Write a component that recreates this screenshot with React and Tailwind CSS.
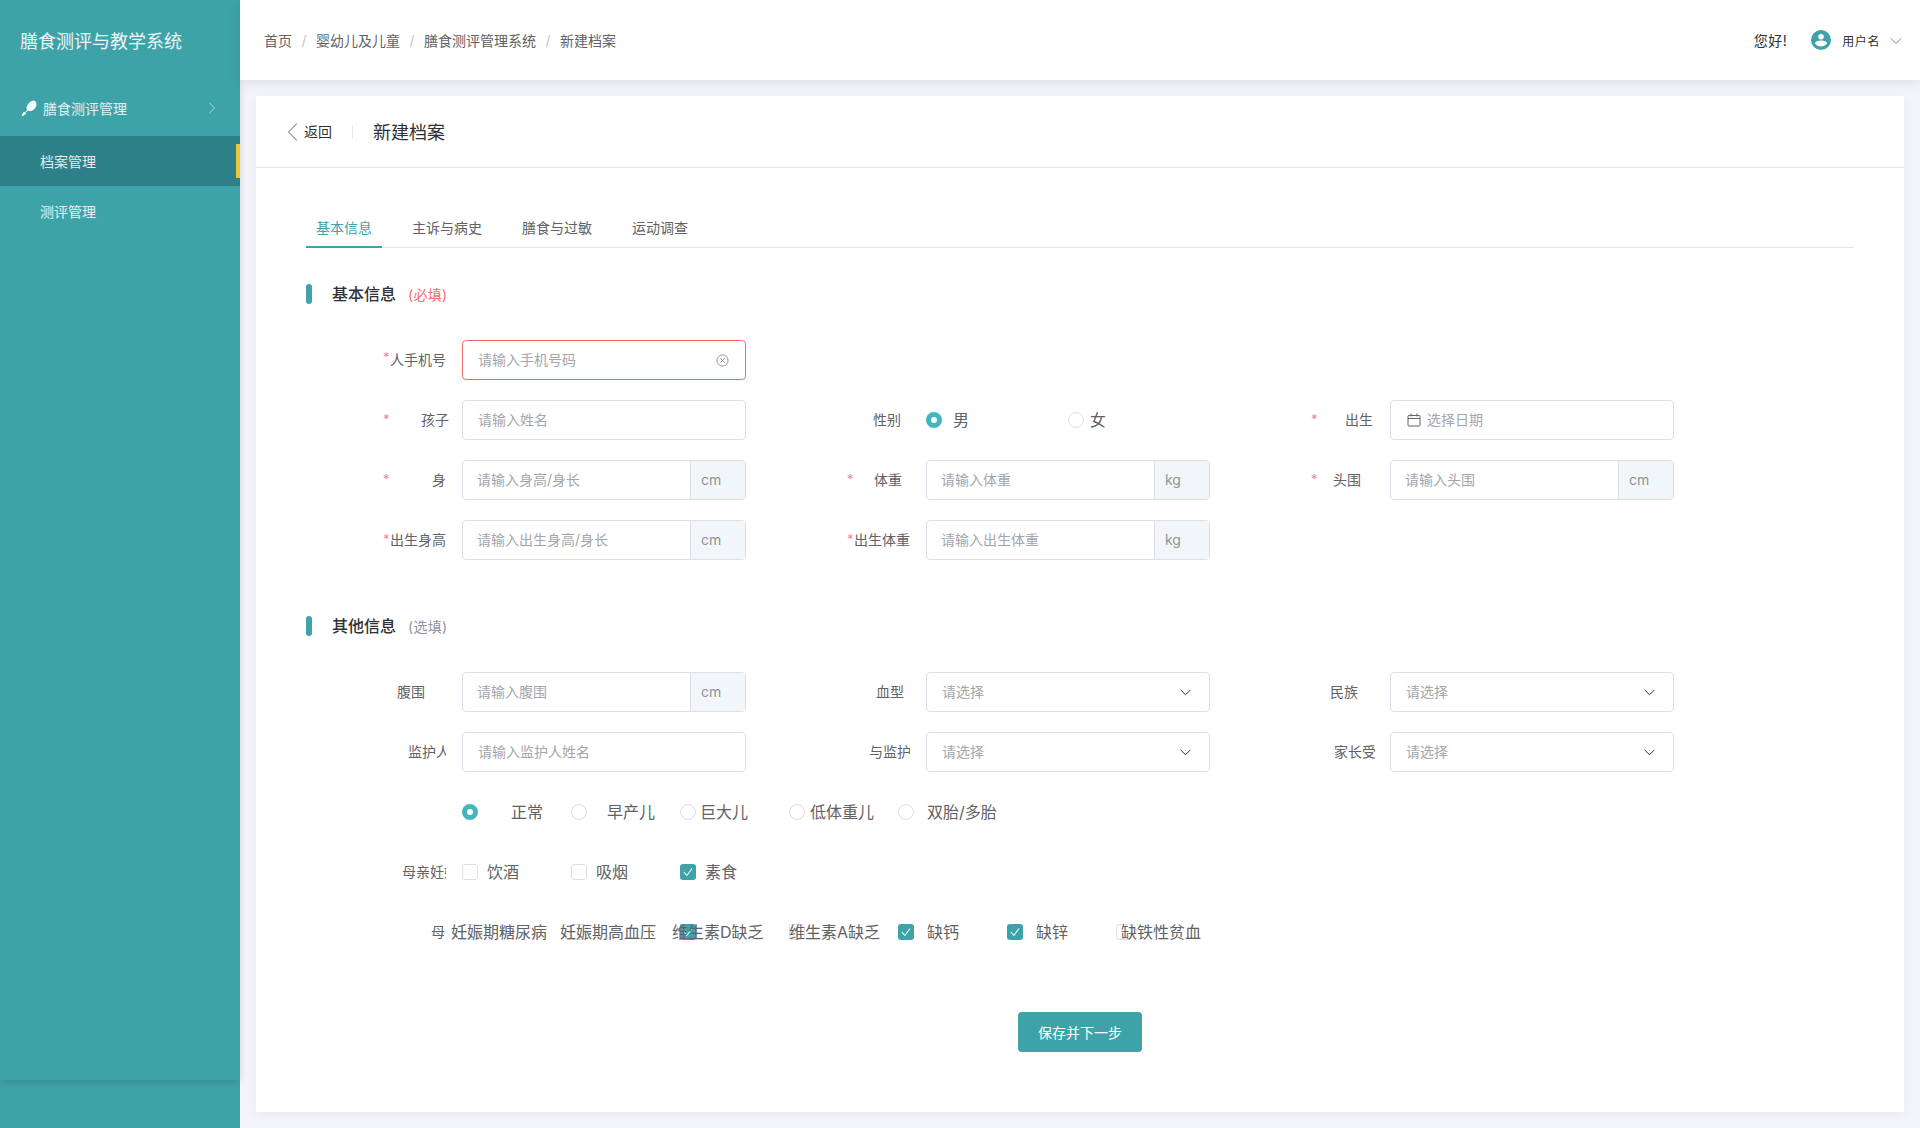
const Chev = ({ d, className }) => (
  <svg viewBox="0 0 12 12" className={className} fill="none" stroke="currentColor" strokeWidth="1" strokeLinecap="round" strokeLinejoin="round">
    <path d={d} vectorEffect="non-scaling-stroke" />
  </svg>
);
const down = "M1 3.5 L6 8.5 L11 3.5";

function Label({ text, cls, star, high }) {
  return (
    <div className="relative w-[156px] shrink-0 h-10">
      {star && <span className={`absolute left-[77px] top-0 text-[13px] text-[#f78989] z-10 ${high ? "leading-[35px]" : "leading-[39px]"}`}>*</span>}
      <div className={`h-10 leading-10 text-[14px] text-[#606266] whitespace-nowrap overflow-hidden ${cls}`}>{text}</div>
    </div>
  );
}

function TextInput({ ph, unit, error }) {
  return (
    <div className={`w-[284px] h-10 flex items-stretch rounded-[4px] border bg-white overflow-hidden ${error ? "border-[#f56c6c]" : "border-[#dcdfe6]"}`}>
      <input readOnly placeholder={ph} className={`flex-1 min-w-0 h-full pb-[2px] text-[14px] outline-none bg-transparent placeholder:text-[#a3a6ad] ${unit ? "pl-[14px]" : "pl-[15px]"}`} />
      {error && (
        <div className="flex items-center pr-[16px]">
          <svg viewBox="0 0 14 14" className="w-[13px] h-[13px] text-[#8d9095]" fill="none" stroke="currentColor" strokeWidth="1">
            <circle cx="7" cy="7" r="6" />
            <path d="M4.5 4.5 L9.5 9.5 M9.5 4.5 L4.5 9.5" />
          </svg>
        </div>
      )}
      {unit && <div className="w-[55px] shrink-0 bg-[#f3f6f8] border-l border-[#dcdfe6] pl-[10px] leading-[38px] text-[14px] text-[#909399]">{unit}</div>}
    </div>
  );
}

function Select() {
  return (
    <div className="w-[284px] h-10 flex items-center justify-between rounded-[4px] border border-[#dcdfe6] bg-white pl-[15px] pr-[18px]">
      <span className="text-[14px] pb-[1px] text-[#a3a6ad]">请选择</span>
      <Chev d={down} className="w-[11px] h-[11px] text-[#303133]" />
    </div>
  );
}

function Radio({ checked }) {
  return checked ? (
    <span className="w-4 h-4 shrink-0 rounded-full bg-[#45b6c0] flex items-center justify-center">
      <span className="w-[6px] h-[6px] rounded-full bg-white" />
    </span>
  ) : (
    <span className="w-4 h-4 shrink-0 rounded-full border border-[#dcdfe6] bg-white" />
  );
}

function Box({ checked }) {
  return checked ? (
    <span className="w-4 h-4 shrink-0 rounded-[3px] bg-[#3ea3a8] flex items-center justify-center">
      <svg viewBox="0 0 12 12" className="w-[14px] h-[14px]" fill="none" stroke="white" strokeWidth="0.9"><path d="M2.5 6 L5 9 L9.5 3" /></svg>
    </span>
  ) : (
    <span className="w-4 h-4 shrink-0 rounded-[3px] border border-[#dcdfe6] bg-white" />
  );
}

function Opt({ children, w, ml, text }) {
  return (
    <div className={`flex items-center shrink-0 ${w}`}>
      {children}
      <span className={`relative text-[16px] text-[#606266] whitespace-nowrap ${ml}`}>{text}</span>
    </div>
  );
}

function Col({ children }) {
  return <div className="w-[464px] shrink-0 flex items-center">{children}</div>;
}

function Row({ children }) {
  return <div className="flex h-10">{children}</div>;
}

function Section({ title, note, noteCls }) {
  return (
    <div className="flex items-center h-5">
      <span className="w-[6px] h-5 rounded-[3px] bg-[#3ea3a8]" />
      <span className="ml-[20px] text-[16px] font-medium text-[#303133]">{title}</span>
      <span className={`ml-[12px] text-[14px] tracking-[0.3px] ${noteCls}`}>{note}</span>
    </div>
  );
}

export default function App() {
  return (
    <div className="flex w-full h-[1128px] overflow-hidden bg-[#f4f5fa] font-['Inter','Noto_Sans_CJK_SC',sans-serif]">
      <aside className="w-[240px] shrink-0 h-full bg-[#3ea3a8]">
        <div className="h-[1080px] shadow-[0_2px_8px_rgba(0,0,0,0.14)] text-white">
          <div className="h-20 pl-5 leading-[84px] text-[18px] text-white/90">膳食测评与教学系统</div>
          <div className="h-[56px] flex items-center pl-[20px] pr-[22px] text-[14px] text-white/85">
            <svg viewBox="0 0 16 16" className="w-[17px] h-[17px] shrink-0" fill="white">
              <path d="M15.5 4.2c0 2.6-2.6 5.6-5.4 6.2-1 .2-1.9 0-2.6-.6L5.3 12c.3.6.2 1.2-.2 1.6-.4.4-.9.4-1.2.2-.1.5-.3.9-.7 1.1-.5.2-1.2 0-1.4-.5-.3-.5-.1-1.1.4-1.4.2-.1.5-.2.7-.1-.2-.4-.1-.9.3-1.2.4-.4 1-.4 1.5-.2l2.1-2.1c-.6-.8-.8-1.7-.5-2.7C7 3.9 9.4 1 12 .6c2-.3 3.5 1.2 3.5 3.6z" />
            </svg>
            <span className="ml-[6px]">膳食测评管理</span>
            <Chev d="M3.5 1 L8.5 6 L3.5 11" className="ml-auto w-3 h-3 text-white/60" />
          </div>
          <div className="relative h-[50px] bg-[#2d8087] pl-10 leading-[52px] text-[14px] text-white/85">
            档案管理
            <span className="absolute right-0 top-2 h-[34px] w-1 bg-[#e8c93a]" />
          </div>
          <div className="h-[50px] pl-10 leading-[52px] text-[14px] text-white/85">测评管理</div>
        </div>
      </aside>

      <div className="flex-1 min-w-0 flex flex-col">
        <header className="relative z-10 h-20 shrink-0 bg-white shadow-[0_2px_12px_rgba(0,0,0,0.1)] flex items-center pl-[24px] pr-[18px] text-[14px] text-[#606266]">
          <span>首页</span>
          <span className="w-6 text-center text-[#c0c4cc]">/</span>
          <span>婴幼儿及儿童</span>
          <span className="w-6 text-center text-[#c0c4cc]">/</span>
          <span>膳食测评管理系统</span>
          <span className="w-6 text-center text-[#c0c4cc]">/</span>
          <span>新建档案</span>
          <span className="ml-auto text-[14px] tracking-[0.5px] mt-[1px] text-[#303133]">您好!</span>
          <svg viewBox="0 0 20 20" className="ml-[24px] w-5 h-5 shrink-0">
            <circle cx="10" cy="10" r="10" fill="#3ea3a8" />
            <circle cx="10" cy="6.8" r="2.8" fill="white" />
            <path d="M4 13.6c0-1.8 3-3 6-3s6 1.2 6 3c-1.4 1.9-3.6 3-6 3s-4.6-1.1-6-3z" fill="white" />
          </svg>
          <span className="ml-[11px] text-[12px] mt-[3px] tracking-[0.6px] text-[#303133]">用户名</span>
          <Chev d={down} className="ml-[10px] mt-[1px] w-3 h-3 text-[#7d8086]" />
        </header>

        <main className="flex-1 p-4 min-h-0">
          <div className="h-[1016px] bg-white shadow-[0_2px_10px_rgba(0,0,0,0.06)]">
            <div className="h-[72px] flex items-center border-b border-[#e4e7ed] pl-[28px]">
              <Chev d="M8.5 0.5 L3 6 L8.5 11.5" className="w-[18px] h-[18px] text-[#606266]" />
              <span className="ml-[2px] text-[14px] text-[#303133]">返回</span>
              <span className="ml-[20px] w-px h-[14px] bg-[#e4e7ed]" />
              <span className="ml-[20px] mt-[2px] text-[18px] text-[#303133]">新建档案</span>
            </div>

            <div className="px-[50px]">
              <div className="mt-[40px] h-10 flex border-b border-[#e4e7ed] text-[14px] text-[#606266]">
                <div className="w-[76px] h-10 text-center leading-[40px] text-[#3ea3a8] border-b-2 border-[#3ea3a8]">基本信息</div>
                <div className="ml-[30px] leading-[40px]">主诉与病史</div>
                <div className="ml-[40px] leading-[40px]">膳食与过敏</div>
                <div className="ml-[40px] leading-[40px]">运动调查</div>
              </div>

              <div className="mt-[36px]">
                <Section title="基本信息" note="(必填)" noteCls="text-[#f56c6c]" />
              </div>

              <div className="mt-[36px] flex flex-col gap-5">
                <Row>
                  <Col><Label star high text="人手机号" cls="ml-[84px]" /><TextInput ph="请输入手机号码" error /></Col>
                </Row>
                <Row>
                  <Col><Label star text="孩子" cls="ml-[115px]" /><TextInput ph="请输入姓名" /></Col>
                  <Col>
                    <Label text="性别" cls="ml-[103px]" />
                    <Opt w="w-[142px]" ml="ml-[11px]" text="男"><Radio checked /></Opt>
                    <Opt w="w-[60px]" ml="ml-[6px]" text="女"><Radio /></Opt>
                  </Col>
                  <Col>
                    <Label star text="出生" cls="ml-[111px]" />
                    <div className="w-[284px] h-10 flex items-center rounded-[4px] border border-[#dcdfe6] bg-white pl-[16px]">
                      <svg viewBox="0 0 14 14" className="w-[14px] h-[14px] text-[#606266]" fill="none" stroke="currentColor" strokeWidth="1">
                        <rect x="1" y="2.5" width="12" height="10.5" rx="1" />
                        <path d="M1 5.5 H13 M4 0.5 V3.5 M10 0.5 V3.5" />
                      </svg>
                      <span className="ml-[6px] pb-[1px] text-[14px] text-[#a3a6ad]">选择日期</span>
                    </div>
                  </Col>
                </Row>
                <Row>
                  <Col><Label star text="身" cls="ml-[126px]" /><TextInput ph="请输入身高/身长" unit="cm" /></Col>
                  <Col><Label star text="体重" cls="ml-[104px]" /><TextInput ph="请输入体重" unit="kg" /></Col>
                  <Col><Label star text="头围" cls="ml-[99px]" /><TextInput ph="请输入头围" unit="cm" /></Col>
                </Row>
                <Row>
                  <Col><Label star text="出生身高" cls="ml-[84px]" /><TextInput ph="请输入出生身高/身长" unit="cm" /></Col>
                  <Col><Label star text="出生体重" cls="ml-[84px]" /><TextInput ph="请输入出生体重" unit="kg" /></Col>
                </Row>
              </div>

              <div className="mt-[56px]">
                <Section title="其他信息" note="(选填)" noteCls="text-[#909399]" />
              </div>

              <div className="mt-[36px] flex flex-col gap-5">
                <Row>
                  <Col><Label text="腹围" cls="ml-[91px]" /><TextInput ph="请输入腹围" unit="cm" /></Col>
                  <Col><Label text="血型" cls="ml-[106px]" /><Select /></Col>
                  <Col><Label text="民族" cls="ml-[96px]" /><Select /></Col>
                </Row>
                <Row>
                  <Col><Label text="监护人姓名" cls="ml-[102px] w-[38px]" /><TextInput ph="请输入监护人姓名" /></Col>
                  <Col><Label text="与监护人关系" cls="ml-[99px] w-[41px]" /><Select /></Col>
                  <Col><Label text="家长受教育程度" cls="ml-[100px] w-[41px]" /><Select /></Col>
                </Row>
                <Row>
                  <div className="w-[156px] shrink-0" />
                  <Opt w="w-[109px]" ml="ml-[33px]" text="正常"><Radio checked /></Opt>
                  <Opt w="w-[109px]" ml="ml-[20px]" text="早产儿"><Radio /></Opt>
                  <Opt w="w-[109px]" ml="ml-[4px]" text="巨大儿"><Radio /></Opt>
                  <Opt w="w-[109px]" ml="ml-[5px]" text="低体重儿"><Radio /></Opt>
                  <Opt w="w-[109px]" ml="ml-[13px]" text="双胎/多胎"><Radio /></Opt>
                </Row>
                <Row>
                  <Label text="母亲妊娠情况" cls="ml-[96px] w-[44px]" />
                  <Opt w="w-[109px]" ml="ml-[9px]" text="饮酒"><Box /></Opt>
                  <Opt w="w-[109px]" ml="ml-[9px]" text="吸烟"><Box /></Opt>
                  <Opt w="w-[109px]" ml="ml-[9px]" text="素食"><Box checked /></Opt>
                </Row>
                <Row>
                  <Label text="母亲疾病史" cls="ml-[125px] w-[15px]" />
                  <Opt w="w-[109px]" ml="-ml-[27px]" text="妊娠期糖尿病"><Box /></Opt>
                  <Opt w="w-[109px]" ml="-ml-[27px]" text="妊娠期高血压"><Box /></Opt>
                  <Opt w="w-[109px]" ml="-ml-[24px]" text="维生素D缺乏"><Box checked /></Opt>
                  <Opt w="w-[109px]" ml="-ml-[16px]" text="维生素A缺乏"><Box /></Opt>
                  <Opt w="w-[109px]" ml="ml-[13px]" text="缺钙"><Box checked /></Opt>
                  <Opt w="w-[109px]" ml="ml-[13px]" text="缺锌"><Box checked /></Opt>
                  <Opt w="w-[109px]" ml="-ml-[11px]" text="缺铁性贫血"><Box /></Opt>
                </Row>
              </div>

              <div className="mt-[60px] flex justify-center">
                <button className="w-[124px] h-10 rounded-[4px] bg-[#3ea3a8] text-[14px] text-white">保存并下一步</button>
              </div>
            </div>
          </div>
        </main>
      </div>
    </div>
  );
}
